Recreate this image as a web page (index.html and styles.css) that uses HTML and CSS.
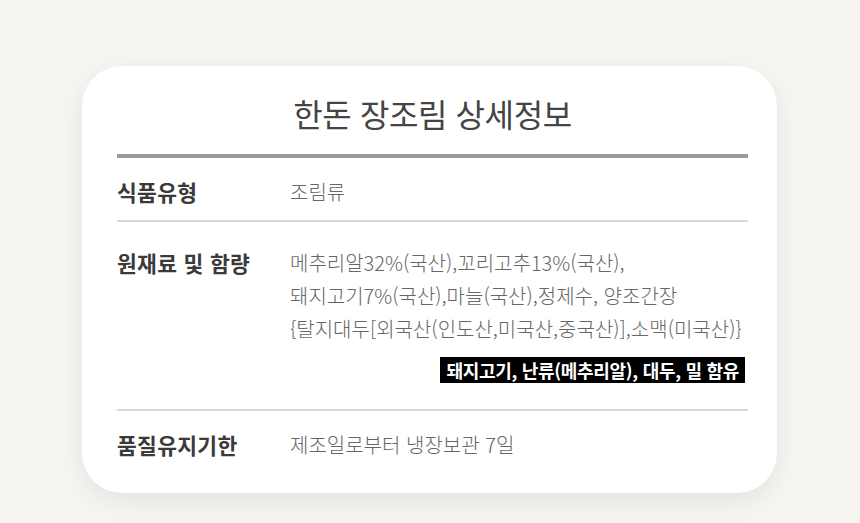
FILE: index.html
```html
<!DOCTYPE html>
<html lang="ko">
<head>
  <meta charset="UTF-8" />
  <meta name="viewport" content="width=device-width, initial-scale=1.0" />
  <title>한돈 장조림 상세정보</title>
  <link rel="stylesheet" href="styles.css">
</head>
<body>
  <!-- 상세정보 카드 -->
  <div class="info-card">
    <h1 class="info-title">한돈 장조림 상세정보</h1>
    <div class="info-table">
      <div class="info-row first">
        <div class="info-label">식품유형</div>
        <div class="info-value">조림류</div>
      </div>
      <div class="info-row middle">
        <div class="info-label">원재료 및 함량</div>
        <div class="info-value">
          메추리알32%(국산),꼬리고추13%(국산),<br>
          돼지고기7%(국산),마늘(국산),정제수, 양조간장<br>
          {탈지대두[외국산(인도산,미국산,중국산)],소맥(미국산)}
          <div class="allergy-wrap">
            <span class="allergy">돼지고기, 난류(메추리알), 대두, 밀 함유</span>
          </div>
        </div>
      </div>
      <div class="info-row last">
        <div class="info-label">품질유지기한</div>
        <div class="info-value">제조일로부터 냉장보관 7일</div>
      </div>
    </div>
  </div>
</body>
</html>
```

FILE: styles.css
```css
* {
  box-sizing: border-box;
}

body {
  margin: 0;
  font-family: "Noto Sans CJK KR", "Noto Sans", sans-serif;
  background: #f6f5f2;
  height: 523px;
  padding-top: 66px;
}

.info-card {
  width: 695px;
  margin-left: 82px;
  height: 427px;
  background: #fff;
  border-radius: 40px;
  box-shadow: 0 8px 26px rgba(0, 0, 0, 0.08);
  padding: 0 29px 0 35px;
}

.info-title {
  margin: 0;
  padding-top: 26px;
  height: 88px;
  text-align: center;
  font-size: 32px;
  font-weight: 400;
  letter-spacing: -0.4px;
  line-height: 42px;
  color: #444;
}

.info-table {
  border-top: 4px solid #9a9a9a;
}

.info-row {
  display: flex;
  border-bottom: 2px solid #d9d9d9;
}

.info-row.first {
  padding: 17px 0 12px;
}

.info-row.middle {
  padding: 24px 0 26px;
}

.info-row.last {
  border-bottom: none;
  padding: 17px 0 0;
}

.info-label {
  width: 173px;
  flex-shrink: 0;
  font-size: 21.5px;
  font-weight: 700;
  letter-spacing: 0.3px;
  line-height: 33px;
  color: #3a3a3a;
}

.info-value {
  flex: 1;
  font-size: 20px;
  font-weight: 300;
  letter-spacing: 0;
  line-height: 33px;
  color: #666;
}

.allergy-wrap {
  text-align: right;
  padding-right: 3px;
  margin-top: 12px;
  line-height: 0;
}

.allergy {
  display: inline-block;
  background: #000;
  color: #fff;
  font-size: 18px;
  font-weight: 700;
  letter-spacing: -0.3px;
  line-height: 26px;
  padding: 0 6px;
}
```
